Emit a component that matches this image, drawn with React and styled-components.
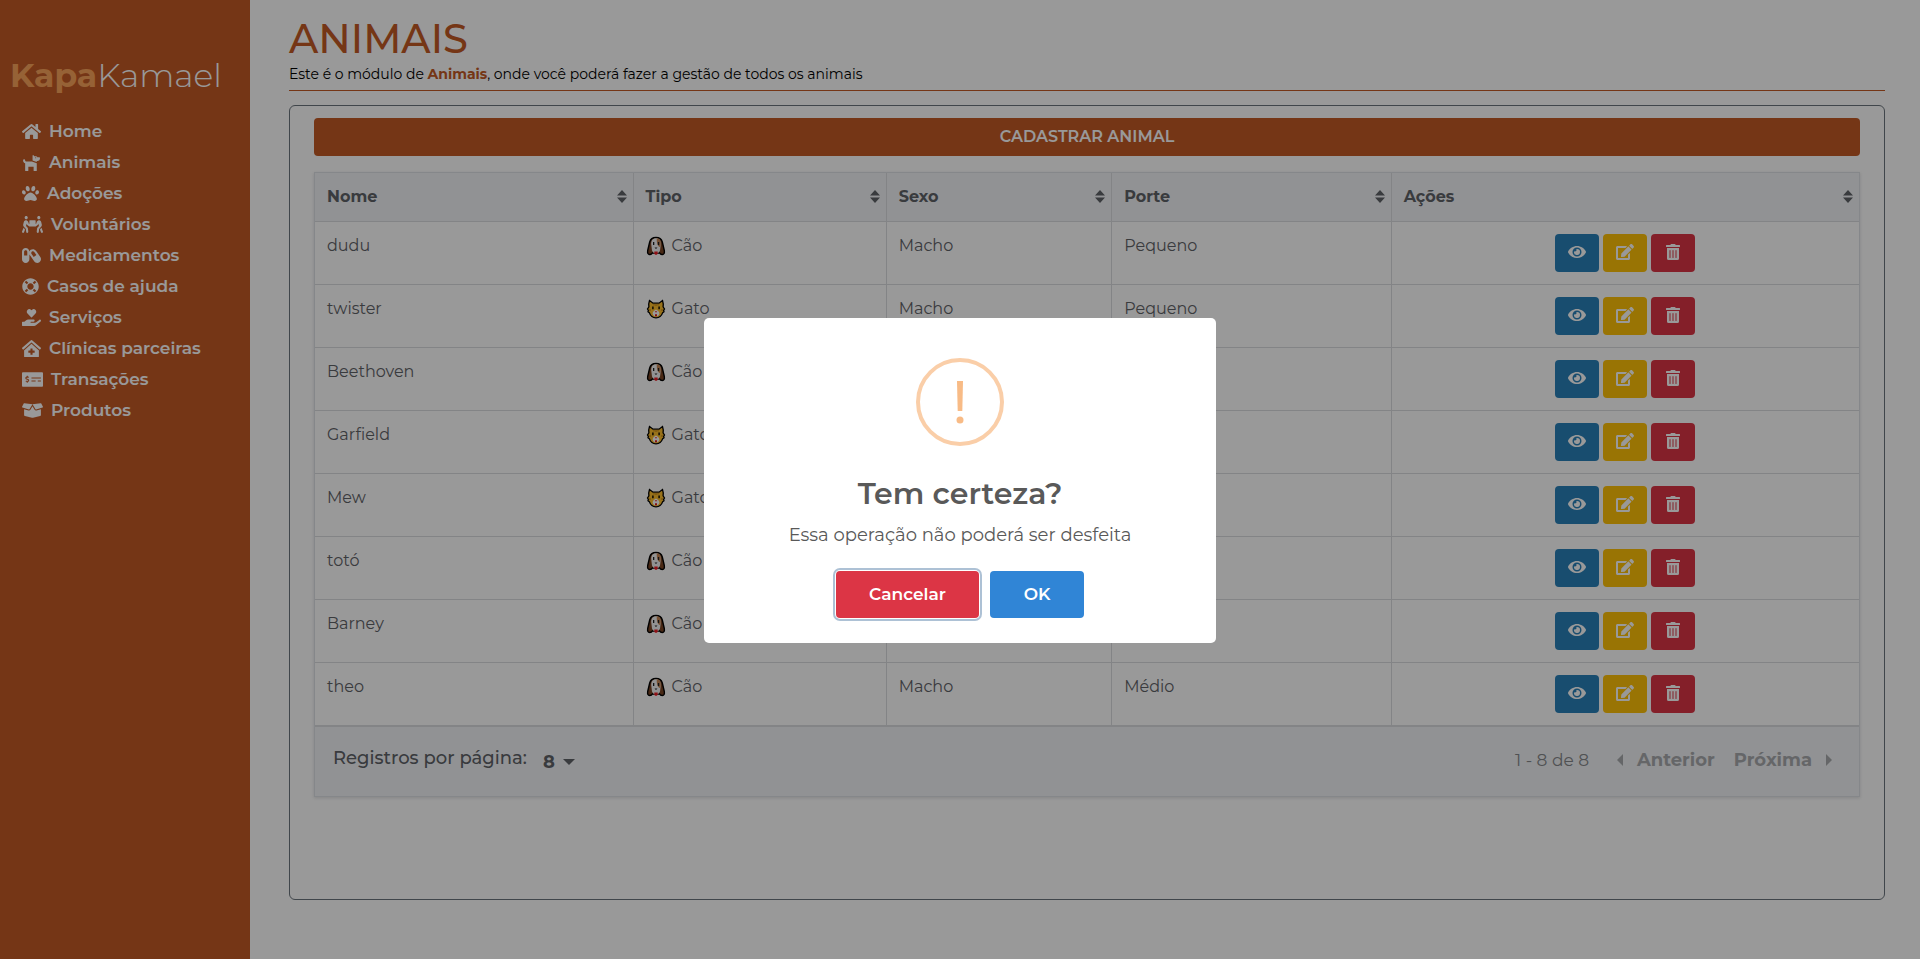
import React from 'react';
import styled, { createGlobalStyle } from 'styled-components';
import {
  FaHome, FaDog, FaPaw, FaPeopleCarry, FaCapsules, FaLifeRing, FaHandHoldingHeart,
  FaClinicMedical, FaMoneyCheckAlt, FaBoxOpen, FaEye, FaEdit, FaTrashAlt,
} from 'react-icons/fa';

const GlobalStyle = createGlobalStyle`
  * { box-sizing: border-box; }
  body {
    margin: 0;
    background: #fff;
    color: #212529;
    font-family: Montserrat, Inter, sans-serif;
    font-size: 16px;
    font-weight: 400;
    line-height: 24px;
  }
  button, select { font: inherit; }
`;

const rust = '#c45a26';

const Page = styled.div`
  display: flex;
  min-height: 100vh;
`;

const Sidebar = styled.aside`
  flex: 0 0 250px;
  min-width: 0;
  background: ${rust};
  color: #fff;
  padding: 51px 10px 0;
`;

const Logo = styled.div`
  font-size: 33px;
  line-height: 48px;
  font-weight: 300;
  white-space: nowrap;
  b { font-weight: 700; color: #fba45b; }
`;

const Menu = styled.nav`
  display: flex;
  flex-direction: column;
  gap: 7px;
  margin-top: 20px;
  padding-left: 12px;
`;

const MenuLink = styled.a`
  display: flex;
  align-items: center;
  gap: 8px;
  color: #fff;
  text-decoration: none;
  font-size: 17px;
  font-weight: 600;
  svg { height: 17px; width: ${(p) => p.$iconWidth}px; }
`;

const Main = styled.main`
  flex: 1;
  min-width: 0;
  display: flex;
  flex-direction: column;
  padding: 15px 35px 59px 39px;
`;

const Header = styled.header`
  border-bottom: 1px solid ${rust};
  padding-bottom: 5px;
  margin-bottom: 14px;
  h1 { margin: 0; font-size: 40px; line-height: 48px; font-weight: 500; color: ${rust}; }
  p { margin: 0; font-size: 14px; line-height: 22px; color: #000; }
  b { font-weight: 700; color: ${rust}; }
`;

const Panel = styled.section`
  flex: 1;
  border: 1px solid #6c757d;
  border-radius: 6px;
  padding: 12px 24px;
`;

const PrimaryButton = styled.button`
  display: block;
  width: 100%;
  height: 38px;
  border: 0;
  border-radius: 4px;
  background: ${rust};
  color: #fff;
  font-weight: 600;
  margin-bottom: 16px;
`;

const TableCard = styled.div`
  border: 1px solid #dee2e6;
  box-shadow: 0 1px 3px rgba(34, 36, 38, 0.15);
`;

const Table = styled.table`
  width: 100%;
  table-layout: fixed;
  border-collapse: collapse;
  color: #5f6368;
`;

const Column = styled.col`
  width: ${(p) => p.$share}%;
`;

const HeadCell = styled.th`
  height: 48px;
  padding: 0 6px 0 12px;
  text-align: left;
  font-weight: 700;
  background: #f2f4f7;
  border-bottom: 1px solid #dadce0;
  & + & { border-left: 1px solid #dadce0; }
`;

const HeadContent = styled.div`
  display: flex;
  align-items: center;
  justify-content: space-between;
`;

const Cell = styled.td`
  height: 63px;
  padding: 12px;
  vertical-align: top;
  border-bottom: 1px solid #dadce0;
  & + & { border-left: 1px solid #dadce0; }
`;

const Kind = styled.span`
  display: flex;
  align-items: center;
  gap: 6px;
`;

const Actions = styled.div`
  display: flex;
  justify-content: center;
  gap: 4px;
`;

const ActionButton = styled.button`
  display: grid;
  place-items: center;
  width: 44px;
  height: 38px;
  padding: 0 0 2px;
  border: 0;
  border-radius: 4px;
  background: ${(p) => p.$color};
  color: #fff;
  svg { height: 16px; width: 18px; }
`;

const Footer = styled.footer`
  display: flex;
  align-items: center;
  justify-content: space-between;
  height: 70px;
  padding: 0 27px 7px 18px;
  background: #f2f4f7;
  border-top: 1px solid #dadce0;
  color: #5f6368;
`;

const PageSize = styled.label`
  display: flex;
  align-items: center;
  gap: 16px;
  font-size: 18px;
  font-weight: 500;
`;

const SelectWrap = styled.span`
  display: flex;
  align-items: center;
  gap: 8px;
  padding-top: 8px;
`;

const Select = styled.select`
  appearance: none;
  width: 12px;
  padding: 0;
  border: 0;
  background: transparent;
  color: inherit;
  font-weight: 700;
`;

const Pager = styled.div`
  display: flex;
  align-items: center;
  gap: 19px;
  padding-top: 4px;
  color: #a9abae;
  font-size: 17px;
`;

const Range = styled.span`
  color: #86888b;
  margin-right: 9px;
`;

const PageButton = styled.button`
  display: flex;
  align-items: center;
  gap: 14px;
  padding: 0;
  border: 0;
  background: transparent;
  color: inherit;
  font-size: 18px;
  font-weight: 700;
`;

const Backdrop = styled.div`
  position: fixed;
  inset: 0;
  display: grid;
  place-items: center;
  padding-top: 2px;
  background: rgba(0, 0, 0, 0.4);
`;

const Dialog = styled.div`
  width: 512px;
  max-width: 100%;
  display: flex;
  flex-direction: column;
  align-items: center;
  padding: 40px 20px 25px;
  background: #fff;
  border-radius: 5px;
  color: #595959;
  h2 { margin: 28px 0 0; font-size: 30px; line-height: 40px; font-weight: 600; }
  p { margin: 8px 0 0; font-size: 18px; line-height: 26px; }
`;

const DialogActions = styled.div`
  display: flex;
  gap: 11px;
  margin-top: 23px;
`;

const DialogButton = styled.button`
  width: ${(p) => p.$width}px;
  height: 47px;
  padding: 0 0 2px;
  border: 0;
  border-radius: 4px;
  background: ${(p) => p.$color};
  color: #fff;
  font-size: 17px;
  font-weight: 600;
  outline: 0;
  box-shadow: ${(p) => (p.$focused ? '0 0 0 1px #fff, 0 0 0 3px rgba(50, 100, 150, 0.4)' : 'none')};
`;

const menu = [
  [FaHome, 'Home', 19], [FaDog, 'Animais', 19], [FaPaw, 'Adoções', 17],
  [FaPeopleCarry, 'Voluntários', 21], [FaCapsules, 'Medicamentos', 19],
  [FaLifeRing, 'Casos de ajuda', 17], [FaHandHoldingHeart, 'Serviços', 19],
  [FaClinicMedical, 'Clínicas parceiras', 19], [FaMoneyCheckAlt, 'Transações', 21],
  [FaBoxOpen, 'Produtos', 21],
];

const columns = [['Nome', 20.6], ['Tipo', 16.4], ['Sexo', 14.6], ['Porte', 18.1], ['Ações', 30.3]];

const animals = [
  ['dudu', 'Cão', 'Macho', 'Pequeno'],
  ['twister', 'Gato', 'Macho', 'Pequeno'],
  ['Beethoven', 'Cão', 'Macho', 'Grande'],
  ['Garfield', 'Gato', 'Macho', 'Médio'],
  ['Mew', 'Gato', 'Macho', 'Pequeno'],
  ['totó', 'Cão', 'Macho', 'Pequeno'],
  ['Barney', 'Cão', 'Macho', 'Médio'],
  ['theo', 'Cão', 'Macho', 'Médio'],
];

const SortIcon = () => (
  <svg width="10" height="13" viewBox="0 0 10 13" fill="currentColor" aria-hidden="true">
    <path d="M0 5.5 5 0l5 5.5zM0 7.5 5 13l5-5.5z" />
  </svg>
);

const Arrow = ({ d, width, height }) => (
  <svg width={width} height={height} viewBox={`0 0 ${width} ${height}`} fill="currentColor" aria-hidden="true">
    <path d={d} />
  </svg>
);

const DogFace = () => (
  <svg width="20" height="20" viewBox="0 0 20 20" aria-hidden="true">
    <path d="M10 1.500C6.500 1.500 4.500 3 3.700 6L1.700 14.500c-.4 2.500.3 4 2 4 1.500 0 2.300-.7 2.700-1.500h7.200c.4.800 1.200 1.500 2.700 1.500 1.700 0 2.400-1.500 2-4L16.300 6c-.8-3-2.800-4.500-6.300-4.500z" fill="#7b4524" stroke="#000" strokeWidth="1.400" />
    <path d="M10 2.200C6.500 2.200 5.200 4.500 5.200 8L6 14.500c.7 2 2.200 3 4 3s3.300-1 4-3L14.800 8c0-3.500-1.300-5.800-4.800-5.800z" fill="#f4f4f4" />
    <path d="M10.800 2.200c3 .3 4.200 2.300 4 6L14 11c-2-.5-3.600-3.500-3.200-8.800z" fill="#c68756" />
    <path d="M7 6h1.300v3H7zM11.900 6h1.300v3h-1.300zM8.500 11.500h3L10 13z" fill="#222" />
    <path d="M8.300 15.500h3.400v2.500L10 19l-1.700-1z" fill="#ed1c24" />
  </svg>
);

const CatFace = () => (
  <svg width="20" height="20" viewBox="0 0 20 20" aria-hidden="true">
    <path d="M3.500 1.500 7 4.200h6l3.500-2.700c.8 2.300.9 4.300.6 6.300L18.500 10l-.9 1.300.4 1.500-1.300.8C15.500 17 13 18.800 10 18.800S4.500 17 3.300 13.600L2 12.800l.4-1.500L1.500 10l1.400-2.200c-.3-2-.2-4 .6-6.300z" fill="#fdbe2c" stroke="#000" strokeWidth="1.300" />
    <path d="M10 10.500c-3 1.500-4 3.500-3 5.200 1.200 2 4.800 2 6 0 1-1.700 0-3.700-3-5.200z" fill="#fff" />
    <path d="M6.200 7.500h1.400v2.700H6.200zM12.400 7.500h1.400v2.700h-1.400z" fill="#000" />
    <path d="M8.800 12.300h2.400L10 13.800zM9 15.200h2v2H9z" fill="#e0211f" />
    <path d="M10 4.500v2.500M8 4.500v2M12 4.500v2M3 11h2M17 11h-2" stroke="#a66a10" strokeWidth=".8" />
  </svg>
);

const WarningIcon = () => (
  <svg width="88" height="88" viewBox="0 0 88 88" role="img" aria-label="Aviso">
    <circle cx="44" cy="44" r="42" fill="none" stroke="#facea8" strokeWidth="4" />
    <path d="M41 23h6l-.7 30h-4.600z" fill="#f8bb86" />
    <circle cx="44" cy="62" r="3.500" fill="#f8bb86" />
  </svg>
);

export default function App() {
  return (
    <>
      <GlobalStyle />
      <Page>
        <Sidebar>
          <Logo><b>Kapa</b>Kamael</Logo>
          <Menu>
            {menu.map(([Icon, label, iconWidth]) => (
              <MenuLink href="#" key={label} $iconWidth={iconWidth}><Icon />{label}</MenuLink>
            ))}
          </Menu>
        </Sidebar>
        <Main>
          <Header>
            <h1>ANIMAIS</h1>
            <p>Este é o módulo de <b>Animais</b>, onde você poderá fazer a gestão de todos os animais</p>
          </Header>
          <Panel>
            <PrimaryButton type="button">CADASTRAR ANIMAL</PrimaryButton>
            <TableCard>
              <Table>
                <colgroup>{columns.map(([name, share]) => <Column key={name} $share={share} />)}</colgroup>
                <thead>
                  <tr>
                    {columns.map(([name]) => (
                      <HeadCell key={name} scope="col"><HeadContent>{name}<SortIcon /></HeadContent></HeadCell>
                    ))}
                  </tr>
                </thead>
                <tbody>
                  {animals.map(([name, kind, sex, size]) => (
                    <tr key={name}>
                      <Cell>{name}</Cell>
                      <Cell><Kind>{kind === 'Cão' ? <DogFace /> : <CatFace />}{kind}</Kind></Cell>
                      <Cell>{sex}</Cell>
                      <Cell>{size}</Cell>
                      <Cell>
                        <Actions>
                          <ActionButton type="button" $color="#2980b9" aria-label="Ver"><FaEye /></ActionButton>
                          <ActionButton type="button" $color="#ffc107" aria-label="Editar"><FaEdit /></ActionButton>
                          <ActionButton type="button" $color="#dc3545" aria-label="Excluir"><FaTrashAlt /></ActionButton>
                        </Actions>
                      </Cell>
                    </tr>
                  ))}
                </tbody>
              </Table>
              <Footer>
                <PageSize>
                  Registros por página:
                  <SelectWrap>
                    <Select defaultValue="8"><option>8</option></Select>
                    <Arrow d="M0 0h12L6 6z" width={12} height={6} />
                  </SelectWrap>
                </PageSize>
                <Pager>
                  <Range>1 - 8 de 8</Range>
                  <PageButton type="button"><Arrow d="M6 0v12L0 6z" width={6} height={12} />Anterior</PageButton>
                  <PageButton type="button">Próxima<Arrow d="M0 0v12l6-6z" width={6} height={12} /></PageButton>
                </Pager>
              </Footer>
            </TableCard>
          </Panel>
        </Main>
      </Page>
      <Backdrop>
        <Dialog role="dialog" aria-modal="true" aria-labelledby="confirm-title">
          <WarningIcon />
          <h2 id="confirm-title">Tem certeza?</h2>
          <p>Essa operação não poderá ser desfeita</p>
          <DialogActions>
            <DialogButton type="button" $width={143} $color="#dc3545" $focused>Cancelar</DialogButton>
            <DialogButton type="button" $width={94} $color="#3085d6">OK</DialogButton>
          </DialogActions>
        </Dialog>
      </Backdrop>
    </>
  );
}
